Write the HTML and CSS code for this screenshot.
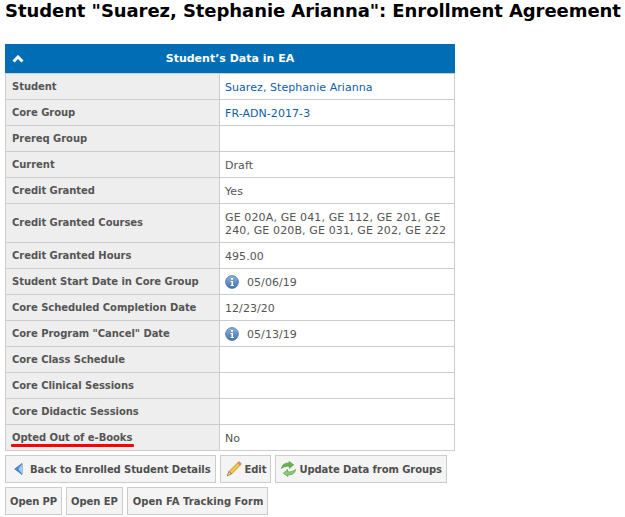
FILE: index.html
```html
<!DOCTYPE html>
<html lang="en">
<head>
<meta charset="utf-8">
<title>Enrollment Agreement</title>
<link rel="stylesheet" href="styles.css">
</head>
<body>
<h1 class="title">Student "Suarez, Stephanie Arianna": Enrollment Agreement</h1>
<div class="panel">
  <div class="panel-head">
    <svg class="chev" width="12" height="8" viewBox="0 0 12 8"><path d="M1.500 6.500 6 2l4.500 4.500" fill="none" stroke="#fff" stroke-width="3"/></svg>
    <span>Student’s Data in EA</span>
  </div>
  <table class="data">
    <tr><th>Student</th><td><a href="#">Suarez, Stephanie Arianna</a></td></tr>
    <tr><th>Core Group</th><td><a href="#">FR-ADN-2017-3</a></td></tr>
    <tr><th>Prereq Group</th><td></td></tr>
    <tr><th>Current</th><td>Draft</td></tr>
    <tr><th>Credit Granted</th><td>Yes</td></tr>
    <tr class="multi"><th>Credit Granted Courses</th><td>GE 020A, GE 041, GE 112, GE 201, GE 240, GE 020B, GE 031, GE 202, GE 222</td></tr>
    <tr><th>Credit Granted Hours</th><td>495.00</td></tr>
    <tr><th>Student Start Date in Core Group</th><td><svg class="info" width="14" height="14" viewBox="0 0 14 14"><use href="#i-info"/></svg>05/06/19</td></tr>
    <tr><th>Core Scheduled Completion Date</th><td>12/23/20</td></tr>
    <tr><th>Core Program "Cancel" Date</th><td><svg class="info" width="14" height="14" viewBox="0 0 14 14"><use href="#i-info"/></svg>05/13/19</td></tr>
    <tr><th>Core Class Schedule</th><td></td></tr>
    <tr><th>Core Clinical Sessions</th><td></td></tr>
    <tr><th>Core Didactic Sessions</th><td></td></tr>
    <tr><th><span class="marked">Opted Out of e-Books</span></th><td>No</td></tr>
  </table>
</div>
<div class="actions">
  <a class="btn back" href="#"><svg width="9" height="12" viewBox="0 0 9 12"><path d="M8 .5v11L.8 6z" fill="#4f8fd6" stroke="#2f6fb8" stroke-width=".8"/><path d="M8 1v10L4.500 6z" fill="#a9cbef"/></svg>Back to Enrolled Student Details</a>
  <a class="btn edit" href="#"><svg width="16" height="16" viewBox="0 0 16 16"><path d="M3 10.500 11.800 1.800l2.400 2.400L5.500 13z" fill="#f6c94a" stroke="#c08a2c" stroke-width=".9"/><path d="M11.800 1.800l2.400 2.400.9-1c.4-.7-1.600-2.700-2.300-2.300z" fill="#e8907e" stroke="#b9822a" stroke-width=".6"/><path d="M3 10.500 1.200 14.800 5.500 13z" fill="#f4dfb8" stroke="#7a4f20" stroke-width=".7"/></svg>Edit</a>
  <a class="btn update" href="#"><svg width="17" height="16" viewBox="0 0 17 17"><path d="M1 8c.5-4 4-6.500 8-5.500V.5L14 4 9.500 8V5.800C7 5 4.500 5.500 1 8z" fill="#66b34e" stroke="#4b8f3a" stroke-width=".6"/><path d="M16 9c-.5 4-4 6.500-8 5.500v2L3 13l4.500-4v2.200C10 12 12.500 11.500 16 9z" fill="#8ccb72" stroke="#4b8f3a" stroke-width=".6"/></svg>Update Data from Groups</a>
</div>
<div class="actions">
  <a class="btn" href="#">Open PP</a>
  <a class="btn" href="#">Open EP</a>
  <a class="btn wide" href="#">Open FA Tracking Form</a>
</div>
<svg class="defs" width="0" height="0"><defs>
  <linearGradient id="g-info" x1="0" y1="0" x2="0" y2="1"><stop offset="0" stop-color="#8fb3dc"/><stop offset="1" stop-color="#3f70ad"/></linearGradient>
  <g id="i-info"><circle cx="7" cy="7" r="6.400" fill="url(#g-info)" stroke="#4d77aa" stroke-width=".8"/><rect x="6" y="3" width="2" height="1.800" fill="#fff"/><path d="M5.500 6h2.500v4h1v1H5.500v-1h1V7h-1z" fill="#fff"/></g>
</defs></svg>
</body>
</html>
```
FILE: styles.css
```css
* { box-sizing: border-box; }
body {
  margin: 0;
  padding: 0 5px;
  width: 625px;
  height: 517px;
  overflow: hidden;
  background: #fff;
  font-family: "DejaVu Sans", Verdana, sans-serif;
  font-size: 11px;
  color: #555;
}
.title {
  margin: 0;
  height: 44px;
  font-size: 18px;
  line-height: 22px;
  font-weight: bold;
  letter-spacing: -0.07px;
  color: #000;
  white-space: nowrap;
}
.panel { width: 450px; }
.panel-head {
  position: relative;
  height: 29px;
  background: #006db5;
  color: #fff;
  font-weight: bold;
  font-size: 11px;
  line-height: 30px;
  text-align: center;
}
.chev { position: absolute; left: 7px; top: 11px; }
.data {
  width: 450px;
  border-collapse: collapse;
  table-layout: fixed;
}
.data th, .data td {
  border: 1px solid #ccc;
  height: 26px;
  padding: 1px 6px 0;
  text-align: left;
  vertical-align: middle;
  line-height: 13px;
}
.data th {
  width: 214px;
  padding-top: 0;
  background: #eee;
  font-weight: bold;
  font-size: 10px;
  letter-spacing: -0.05px;
  color: #555;
}
.data td { padding-left: 5px; letter-spacing: 0.06px; }
.data a { color: #0f5ca8; text-decoration: none; }
.data .multi th { height: 39px; padding: 0 6px 1px; }
.data .multi td { height: 39px; letter-spacing: 0.13px; }
.info { margin-right: 8px; vertical-align: -3px; }
.marked { position: relative; }
.marked::after {
  content: "";
  position: absolute;
  left: -1px;
  right: -2px;
  bottom: -4px;
  height: 3px;
  background: #f00;
  border-radius: 1px;
}
.actions { display: flex; gap: 4px; margin-top: 4px; }
.btn {
  display: inline-flex;
  align-items: center;
  height: 28px;
  padding: 0 4px;
  background: #f4f4f4;
  border: 1px solid #ccc;
  color: #4f4f4f;
  font-size: 10px;
  font-weight: bold;
  letter-spacing: -0.09px;
  text-decoration: none;
  white-space: nowrap;
}
.btn svg { flex: none; }
.back { padding-left: 8px; }
.back svg { margin-right: 7px; }
.edit { padding-left: 5px; }
.edit svg { margin-right: 3px; }
.update svg { margin-right: 2px; }
.wide { padding-left: 5px; letter-spacing: 0.05px; }
.defs { position: absolute; }
```
